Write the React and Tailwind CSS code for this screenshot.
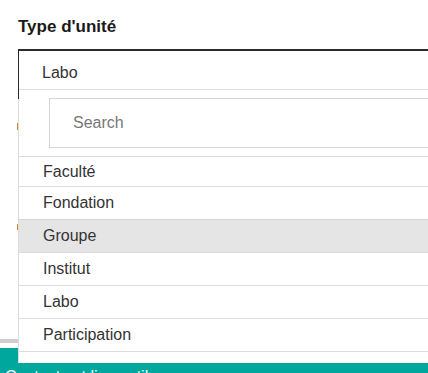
const options = ['Faculté', 'Fondation', 'Groupe', 'Institut', 'Labo', 'Participation']

function UnitTypeSelect() {
  return (
    <div className="absolute left-[18px] top-[89px] w-[440px] h-[274px] z-10 bg-white border-l border-t border-[#dcdcdc] flex flex-col">
      {/* Search */}
      <div className="pt-[8px] pb-[8px] pl-[30px]">
        <div className="h-[50px] border border-[#d6d6d6] flex items-center pl-[23px] text-[16px] text-[#777]">
          Search
        </div>
      </div>
      {options.map((opt, i) => (
        <div
          key={opt}
          className={`border-t pl-[24px] flex items-center text-[16px] text-[#333] ${i === 0 ? 'h-[30px]' : 'h-[33px]'} ${
            opt === 'Groupe' ? 'bg-[#e5e5e5] border-[#d6d6d6]' : 'border-[#dcdcdc]'
          } ${opt === 'Institut' ? 'border-[#cacaca]' : ''}`}
        >
          {opt}
        </div>
      ))}
      <div className="border-t border-[#dcdcdc] flex-1" />
    </div>
  )
}

export default function App() {
  return (
    <div className="relative w-[428px] h-[373px] overflow-hidden bg-white font-['Liberation_Sans',Arial,sans-serif]">
      <h2 className="pt-[17px] pl-[18px] h-[49px] text-[17px] leading-[20px] font-bold text-[#1a1a1a]">Type d'unité</h2>

      {/* Select box */}
      <div className="relative z-20 ml-[18px] h-[50px] border-t-2 border-l border-[#2b2b2b] pl-[23px] pt-[12px] text-[16px] leading-[20px] text-[#333]">
        Labo
      </div>

      {/* Page content behind the dropdown */}
      <div className="h-[240px] pl-[17px] flex flex-col">
        <div className="mt-[24px] w-[2px] h-[7px] bg-[#d9822b]" />
        <div className="mt-[94px] w-[2px] h-[6px] bg-[#d9822b]" />
      </div>
      <div className="h-[4px] bg-[#cfcfcf]" />
      <div className="h-[5px]" />
      <div className="h-[40px] bg-[#00a79d] pt-[19px] pl-[5px] text-[16px] leading-[20px] text-white whitespace-nowrap">
        Contacts et liens utiles
      </div>

      <UnitTypeSelect />
    </div>
  )
}
